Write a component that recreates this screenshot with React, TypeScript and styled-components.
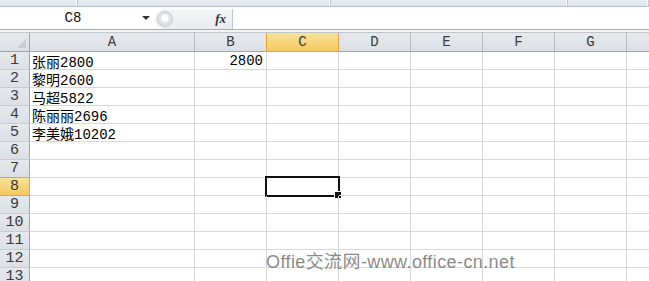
import React from "react";
import styled, { createGlobalStyle, css } from "styled-components";

const GlobalStyle = createGlobalStyle`
  html, body { margin: 0; padding: 0; background: #ffffff; overflow: hidden; }
  * { box-sizing: border-box; }
`;

const COLS = ["A", "B", "C", "D", "E", "F", "G", "H"];
const WIDTHS = [165, 72, 72, 72, 72, 72, 72, 80];
const ROW_HEADER_W = 30;

const DATA: Record<string, { text: string; align?: "left" | "right" }> = {
  "A1": { text: "张丽2800" },
  "A2": { text: "黎明2600" },
  "A3": { text: "马超5822" },
  "A4": { text: "陈丽丽2696" },
  "A5": { text: "李美娥10202" },
  "B1": { text: "2800", align: "right" },
};

const Page = styled.div`
  position: relative;
  width: 649px;
  height: 281px;
  overflow: hidden;
  background: #fff;
  font-family: "Liberation Mono", "Noto Sans CJK SC", monospace;
`;

const RibbonStrip = styled.div`
  display: flex;
  height: 7px;
  background: linear-gradient(#e8edf3, #dfe5ec);
  border-bottom: 1px solid #b9bfc7;
`;

const RibbonGroup = styled.div<{ $w?: number }>`
  flex: ${(p) => (p.$w ? `0 0 ${p.$w}px` : "1 1 auto")};
  border-right: 1px solid #c4cad2;
  box-shadow: inset -1px 0 0 #f7f9fb;
`;

const FormulaBar = styled.div`
  display: flex;
  height: 22px;
  background: #fff;
`;

const NameBox = styled.div`
  flex: 0 0 155px;
  display: flex;
  align-items: center;
  font-size: 14px;
  color: #111;
`;

const NameText = styled.span`
  flex: 1;
  text-align: center;
  padding-left: 4px;
`;

const DropArrow = styled.span`
  width: 0;
  height: 0;
  margin-right: 5px;
  border-left: 4px solid transparent;
  border-right: 4px solid transparent;
  border-top: 4px solid #333;
`;

const FxArea = styled.div`
  flex: 0 0 78px;
  display: flex;
  align-items: center;
  justify-content: flex-end;
  margin-top: 2px;
  background: linear-gradient(#f4f5f7, #e9ebee);
  border-right: 1px solid #c3c7cc;
  border-radius: 10px 0 0 10px;
  padding-right: 6px;
  position: relative;
`;

const Knob = styled.span`
  position: absolute;
  left: 2px;
  top: 2px;
  width: 16px;
  height: 16px;
  border-radius: 50%;
  border: 1px solid #c9cdd2;
  background: radial-gradient(circle at 50% 45%, #ffffff 0 3px, #e6e8eb 4px, #d9dce0 8px);
`;

const FxLabel = styled.span`
  font-family: "Liberation Serif", serif;
  font-style: italic;
  font-weight: bold;
  font-size: 13px;
  color: #333;
`;

const FormulaInput = styled.div`
  flex: 1;
`;

const Separator = styled.div`
  height: 4px;
  border-top: 1px solid #a9afb7;
  border-bottom: 1px solid #c1c6cc;
  background: #f1f2f4;
`;

const Grid = styled.div`
  display: flex;
  flex-direction: column;
`;

const Row = styled.div<{ $h: number }>`
  display: flex;
  height: ${(p) => p.$h}px;
`;

const headerBase = css<{ $active?: boolean }>`
  display: flex;
  align-items: center;
  justify-content: center;
  font-family: "Liberation Mono", monospace;
  font-size: 14px;
  color: #3a3a3a;
  background: ${(p) =>
    p.$active ? "linear-gradient(#f9e29a, #f4c85f)" : "linear-gradient(#e5e8ec, #dcdfe4)"};
`;

const Corner = styled.div`
  flex: 0 0 ${ROW_HEADER_W}px;
  position: relative;
  background: linear-gradient(#e5e8ec, #dcdfe4);
  border-right: 1px solid #9fa5ad;
  border-bottom: 1px solid #9fa5ad;
  &::after {
    content: "";
    position: absolute;
    right: 3px;
    bottom: 3px;
    width: 0;
    height: 0;
    border-left: 9px solid transparent;
    border-bottom: 9px solid #c9cdd3;
  }
`;

const ColHeader = styled.div<{ $w: number; $active?: boolean }>`
  ${headerBase};
  flex: 0 0 ${(p) => p.$w}px;
  border-right: 1px solid ${(p) => (p.$active ? "#e2a23e" : "#b6bbc2")};
  border-bottom: 1px solid ${(p) => (p.$active ? "#e2a23e" : "#9fa5ad")};
  ${(p) => p.$active && "border-left: 1px solid #e2a23e; margin-left: -1px; flex-basis: " + (p.$w + 1) + "px;"}
`;

const RowHeader = styled.div<{ $active?: boolean }>`
  ${headerBase};
  flex: 0 0 ${ROW_HEADER_W}px;
  font-size: 15px;
  border-right: 1px solid ${(p) => (p.$active ? "#e2a23e" : "#9fa5ad")};
  border-bottom: 1px solid ${(p) => (p.$active ? "#e2a23e" : "#c9cdd2")};
  ${(p) => p.$active && "border-top: 1px solid #e2a23e; margin-top: -1px; height: 19px;"}
`;

const Cell = styled.div<{ $w: number; $align?: "left" | "right" }>`
  flex: 0 0 ${(p) => p.$w}px;
  position: relative;
  display: flex;
  align-items: center;
  justify-content: ${(p) => (p.$align === "right" ? "flex-end" : "flex-start")};
  padding: 0 3px 0 2px;
  border-right: 1px solid #d6d8db;
  border-bottom: 1px solid #d6d8db;
  font-size: 14px;
  color: #000;
  white-space: nowrap;
`;

const Selection = styled.div`
  position: absolute;
  left: -2px;
  top: -2px;
  width: 75px;
  height: 21px;
  border: 2px solid #111;
  pointer-events: none;
  &::after {
    content: "";
    position: absolute;
    right: -4px;
    bottom: -4px;
    width: 6px;
    height: 6px;
    background: #111;
    border: 1px solid #fff;
  }
`;

const Watermark = styled.div`
  position: absolute;
  left: 266px;
  top: 247px;
  font-family: "Liberation Sans", "Noto Sans CJK SC", sans-serif;
  font-size: 18px;
  letter-spacing: 0.4px;
  color: rgba(115, 115, 115, 0.85);
  white-space: nowrap;
  pointer-events: none;
`;

export default function App() {
  const rows = Array.from({ length: 13 }, (_, i) => i + 1);
  return (
    <>
      <GlobalStyle />
      <Page>
        <RibbonStrip>
          <RibbonGroup $w={78} />
          <RibbonGroup $w={253} />
          <RibbonGroup $w={237} />
          <RibbonGroup />
        </RibbonStrip>
        <FormulaBar>
          <NameBox>
            <NameText>C8</NameText>
            <DropArrow />
          </NameBox>
          <FxArea>
            <Knob />
            <FxLabel>fx</FxLabel>
          </FxArea>
          <FormulaInput />
        </FormulaBar>
        <Separator />
        <Grid>
          <Row $h={19}>
            <Corner />
            {COLS.map((c, i) => (
              <ColHeader key={c} $w={WIDTHS[i]} $active={c === "C"}>
                {c === "H" ? "" : c}
              </ColHeader>
            ))}
          </Row>
          {rows.map((r) => (
            <Row key={r} $h={18}>
              <RowHeader $active={r === 8}>{r}</RowHeader>
              {COLS.map((c, i) => {
                const d = DATA[`${c}${r}`];
                return (
                  <Cell key={c} $w={WIDTHS[i]} $align={d?.align}>
                    {d?.text}
                    {c === "C" && r === 8 && <Selection />}
                  </Cell>
                );
              })}
            </Row>
          ))}
        </Grid>
        <Watermark>Offie交流网-www.office-cn.net</Watermark>
      </Page>
    </>
  );
}
